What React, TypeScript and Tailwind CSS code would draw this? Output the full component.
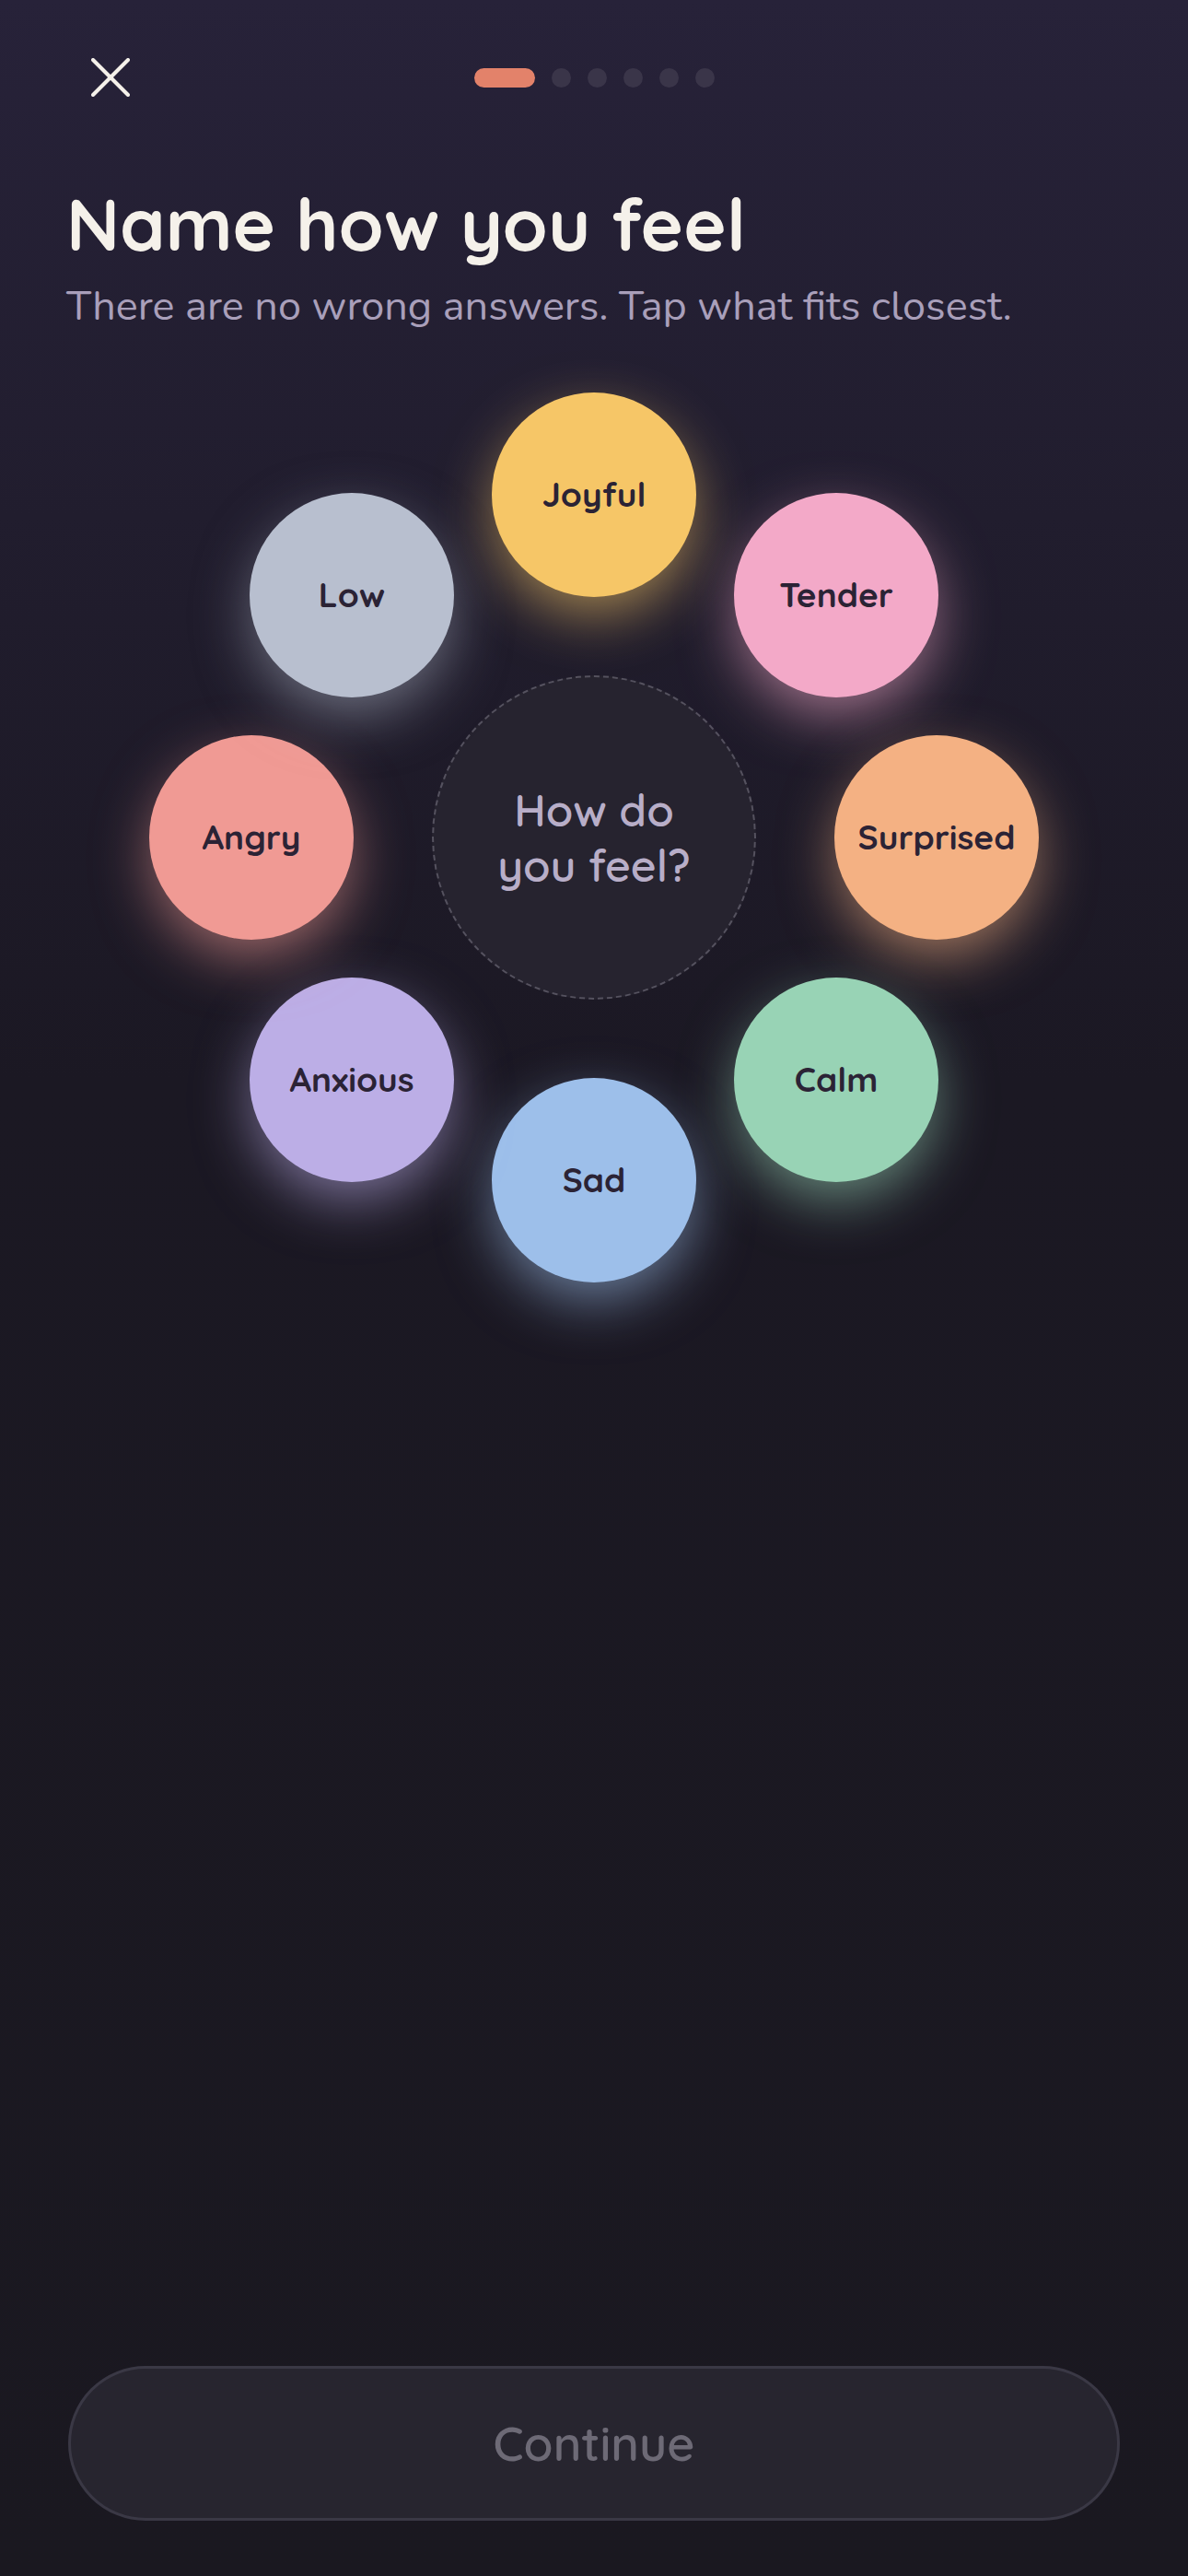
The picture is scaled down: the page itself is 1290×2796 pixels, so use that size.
import React from "react";

const nodes = [
  { label: "Joyful", pos: "left-[372px] top-[0px]", cls: "bg-[#f6c667] shadow-[0_22px_64px_-6px_rgba(246,198,103,0.65)]" },
  { label: "Tender", pos: "left-[635px] top-[109px]", cls: "bg-[#f3a9c8] shadow-[0_22px_64px_-6px_rgba(243,169,200,0.65)]" },
  { label: "Surprised", pos: "left-[744px] top-[372px]", cls: "bg-[#f4b183] shadow-[0_22px_64px_-6px_rgba(244,177,131,0.65)]" },
  { label: "Calm", pos: "left-[635px] top-[635px]", cls: "bg-[#98d3b5] shadow-[0_22px_64px_-6px_rgba(152,211,181,0.65)]" },
  { label: "Sad", pos: "left-[372px] top-[744px]", cls: "bg-[#9dbfea] shadow-[0_22px_64px_-6px_rgba(157,191,234,0.65)]" },
  { label: "Anxious", pos: "left-[109px] top-[635px]", cls: "bg-[#bcaee6] shadow-[0_22px_64px_-6px_rgba(188,174,230,0.65)]" },
  { label: "Angry", pos: "left-[0px] top-[372px]", cls: "bg-[#f09a94] shadow-[0_22px_64px_-6px_rgba(240,154,148,0.65)]" },
  { label: "Low", pos: "left-[109px] top-[109px]", cls: "bg-[#b8bfcf] shadow-[0_22px_64px_-6px_rgba(184,191,207,0.55)]" },
];

export default function App() {
  return (
    <div
      className="min-h-screen w-full flex flex-col bg-[linear-gradient(180deg,#272239_0%,#211d2e_20%,#1b1823_42%,#1a1820_100%)] font-['Quicksand','Nunito','Lato',sans-serif]"
    >
      {/* Header */}
      <div className="grid grid-cols-[1fr_auto_1fr] items-center pt-[63px] px-[99px]">
        <button className="w-[42px] h-[42px] flex items-center justify-center">
          <svg width="42" height="42" viewBox="0 0 42 42" fill="none">
            <line x1="2" y1="2" x2="40" y2="40" stroke="#f5f1ea" strokeWidth="4" strokeLinecap="round" />
            <line x1="40" y1="2" x2="2" y2="40" stroke="#f5f1ea" strokeWidth="4" strokeLinecap="round" />
          </svg>
        </button>
        <div className="flex items-center gap-[18px]">
          <div className="w-[66px] h-[21px] rounded-full bg-[#e3826a]" />
          <div className="w-[21px] h-[21px] rounded-full bg-[#3a3549]" />
          <div className="w-[21px] h-[21px] rounded-full bg-[#3a3549]" />
          <div className="w-[21px] h-[21px] rounded-full bg-[#3a3549]" />
          <div className="w-[21px] h-[21px] rounded-full bg-[#3a3549]" />
          <div className="w-[21px] h-[21px] rounded-full bg-[#3a3549]" />
        </div>
        <div />
      </div>

      {/* Title */}
      <div className="px-[72px]">
        <h1 className="mt-[91px] text-[79px] leading-[1.2] font-bold text-[#f5f1ea]">
          Name how you feel
        </h1>
        <p className="mt-[15px] text-[45px] leading-[1.2] text-[#a99fba] font-['Nunito','Lato',sans-serif]">
          There are no wrong answers. Tap what fits closest.
        </p>
      </div>

      {/* Ring */}
      <div className="mt-[66px] flex justify-center">
        <div className="relative w-[966px] h-[966px]">
          <div className="absolute left-[307px] top-[307px] w-[352px] h-[352px] rounded-full bg-[#26232f] border-2 border-dashed border-[#55525f] flex items-center justify-center">
            <span className="text-center text-[48px] leading-[60px] font-semibold text-[#b8aec8]">
              How do
              <br />
              you feel?
            </span>
          </div>
          {nodes.map((n) => (
            <button
              key={n.label}
              className={`absolute ${n.pos} ${n.cls} w-[222px] h-[222px] rounded-full flex items-center justify-center`}
            >
              <span className="text-[37px] font-bold text-[#2b2335]">{n.label}</span>
            </button>
          ))}
        </div>
      </div>

      {/* Continue */}
      <div className="mt-auto px-[74px] pb-[60px]">
        <button className="w-full h-[168px] rounded-full bg-[#27252f] border-[3px] border-[#3a3845] flex items-center justify-center">
          <span className="text-[52px] font-semibold text-[#6d6a76]">Continue</span>
        </button>
      </div>
    </div>
  );
}
